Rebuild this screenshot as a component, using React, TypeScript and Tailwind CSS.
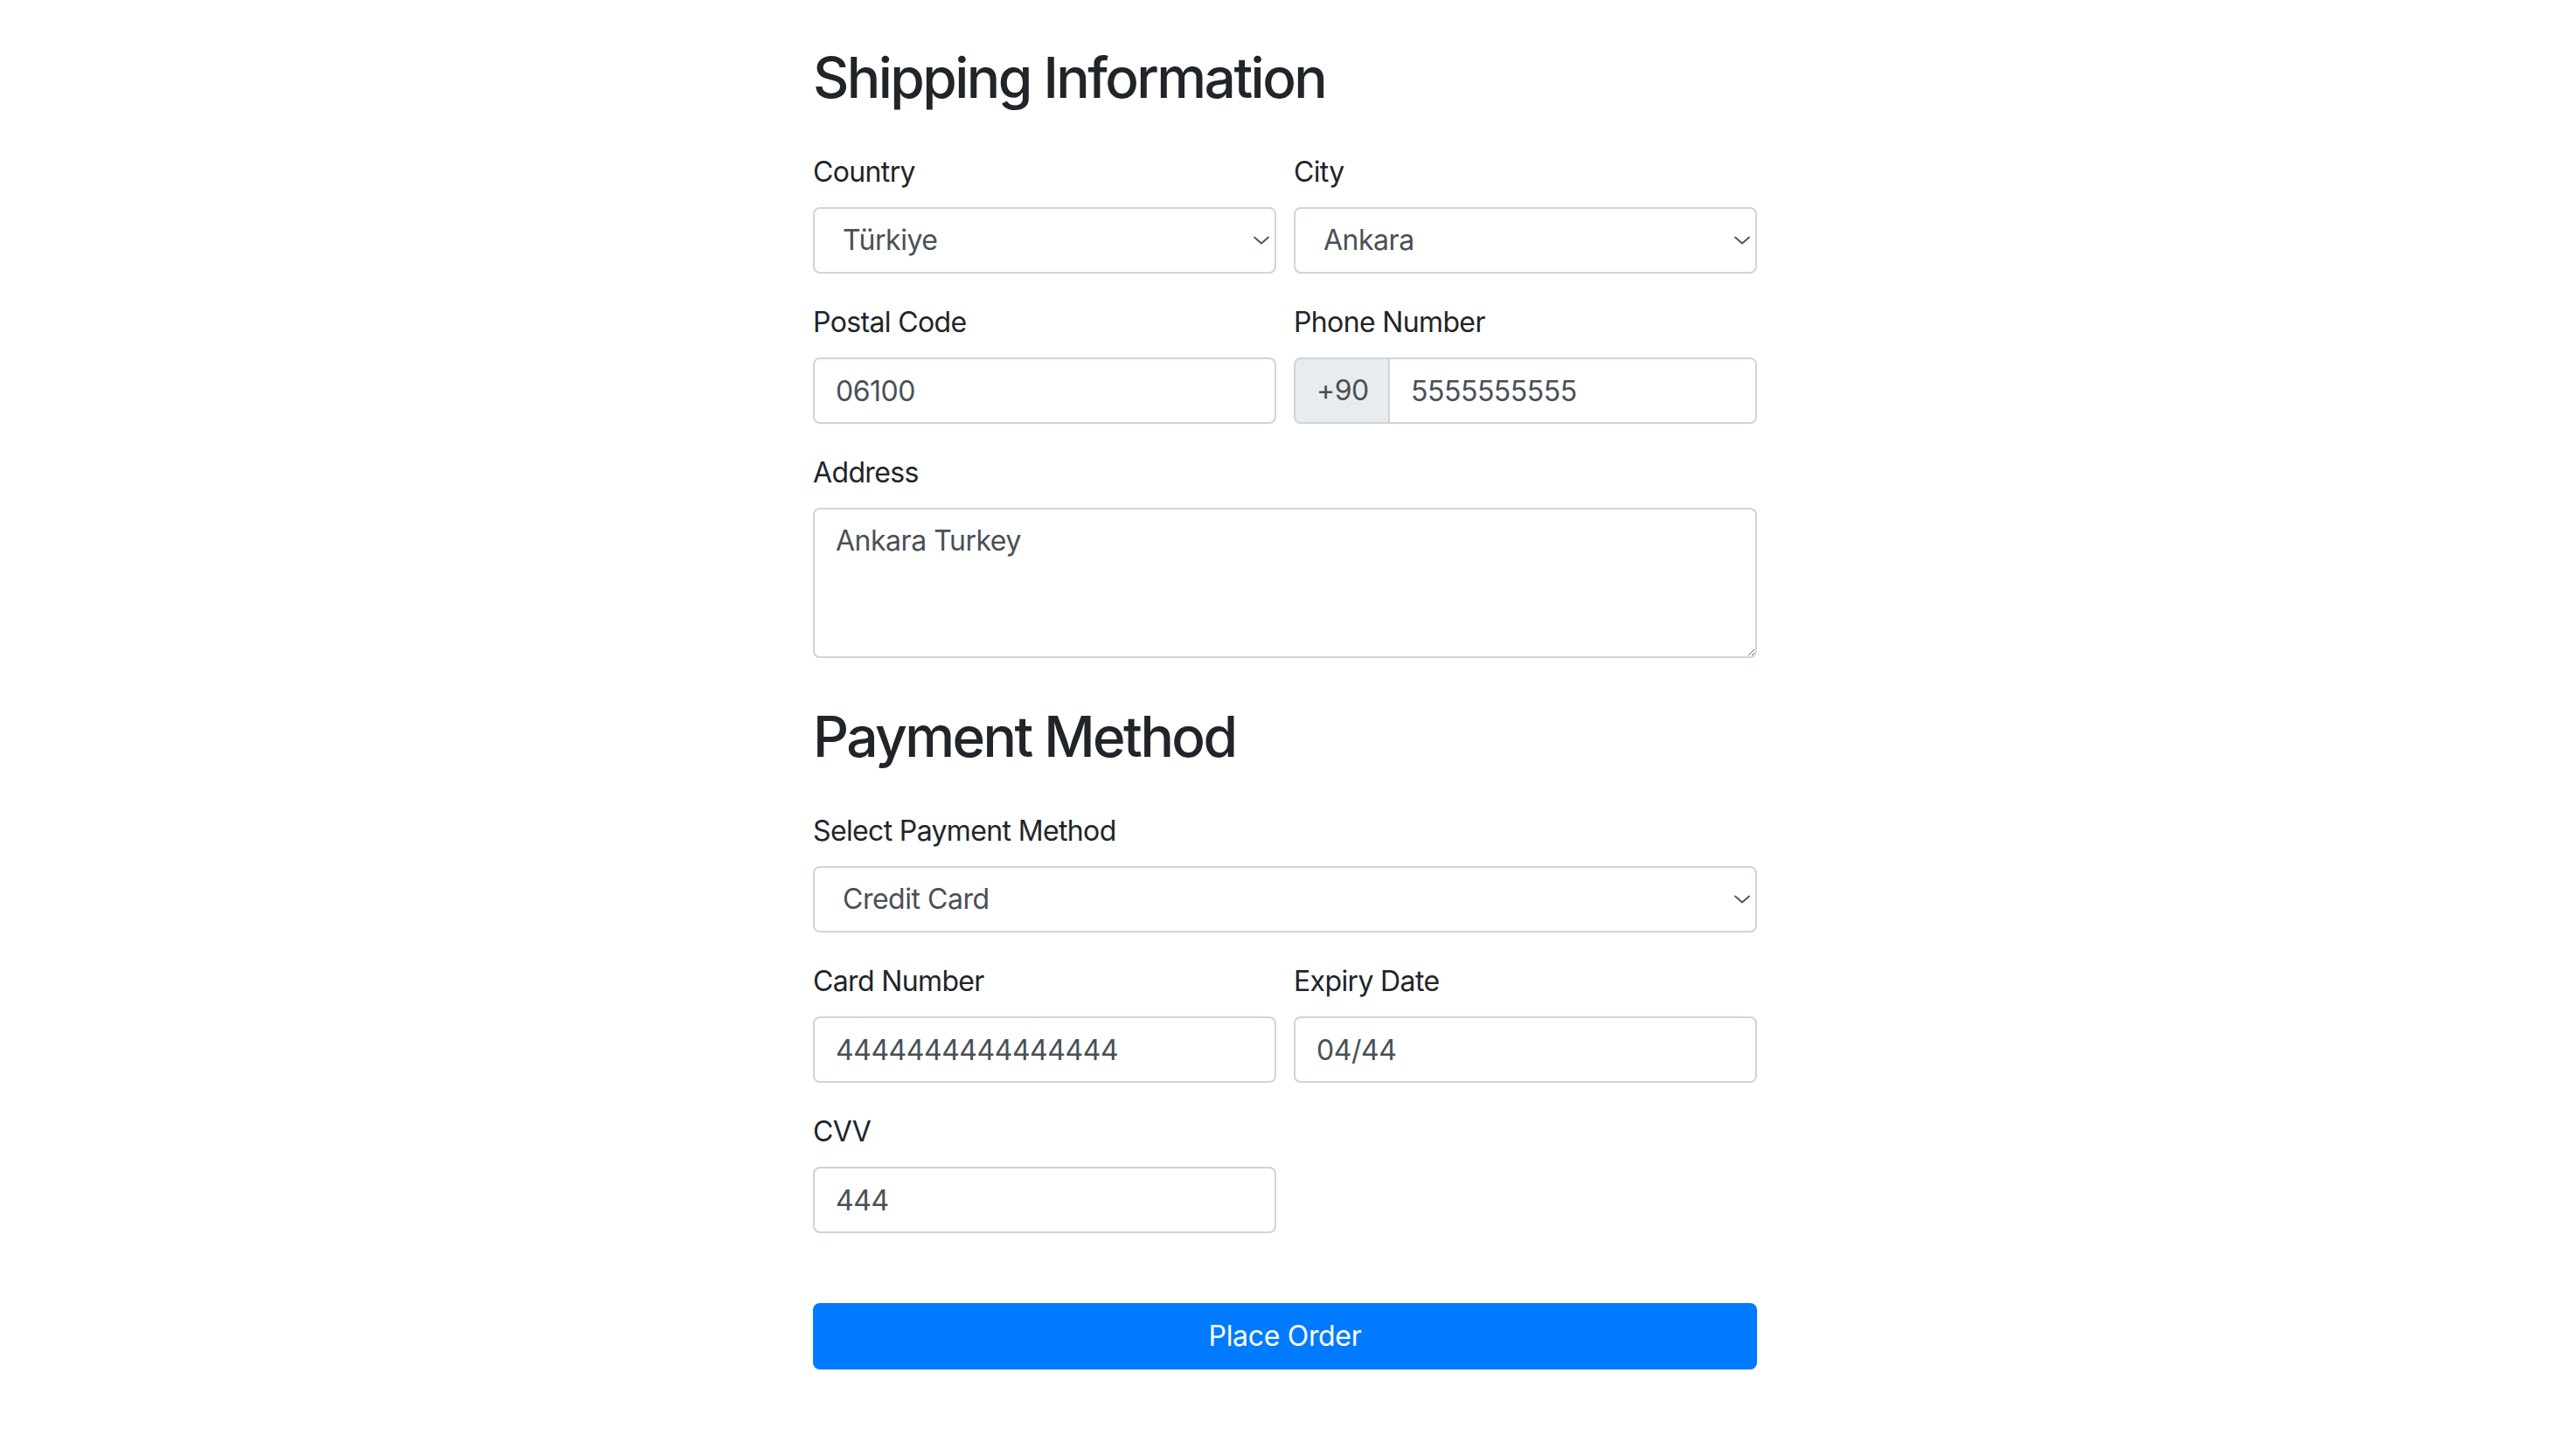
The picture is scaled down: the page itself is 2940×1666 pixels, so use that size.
import React from 'react';

type FieldProps = { label: string; children: React.ReactNode };

const Field: React.FC<FieldProps> = ({ label, children }) => (
    <div className="mb-[32px]">
        <label className="block mb-[16px] text-[32px] leading-[48px] text-[#212529] tracking-[-0.02em]">{label}</label>
        {children}
    </div>
);

const inputCls =
    'block w-full h-[76px] px-[24px] bg-white border-2 border-[#ced4da] rounded-[8px] text-[32px] leading-[48px] text-[#495057] tracking-[-0.015em] outline-none';

const Chevron = () => (
    <svg className="absolute right-[8px] top-1/2 -translate-y-1/2 pointer-events-none" width="18" height="10" viewBox="0 0 18 10" fill="none">
        <path d="M1 1.5l8 7 8-7" stroke="#495057" strokeWidth="1.8" strokeLinecap="round" strokeLinejoin="round" />
    </svg>
);

const Select: React.FC<{ value: string }> = ({ value }) => (
    <div className="relative">
        <select
            defaultValue={value}
            className="block w-full h-[76px] pl-[32px] pr-[48px] appearance-none bg-white border-2 border-[#ced4da] rounded-[8px] text-[32px] text-[#495057] tracking-[-0.015em] outline-none"
        >
            <option>{value}</option>
        </select>
        <Chevron />
    </div>
);

const App: React.FC = () => {
    return (
        <div className="min-h-screen bg-white font-['Inter',sans-serif]">
            <form className="w-[1080px] mx-auto pt-[50px] pb-[80px]" onSubmit={(e) => e.preventDefault()}>
                <h2 className="mb-[46px] text-[64px] leading-[77px] font-medium text-[#212529] tracking-[-0.04em]">Shipping Information</h2>

                <div className="grid grid-cols-2 gap-x-[20px]">
                    <Field label="Country">
                        <Select value="Türkiye" />
                    </Field>
                    <Field label="City">
                        <Select value="Ankara" />
                    </Field>
                    <Field label="Postal Code">
                        <input className={inputCls} defaultValue="06100" />
                    </Field>
                    <Field label="Phone Number">
                        <div className="flex">
                            <div className="flex items-center w-[110px] shrink-0 pl-[24px] bg-[#e9ecef] border-2 border-[#ced4da] rounded-l-[8px] text-[32px] text-[#495057] tracking-[-0.015em]">
                                +90
                            </div>
                            <input
                                className="block w-full min-w-0 h-[76px] px-[24px] bg-white border-2 border-l-0 border-[#ced4da] rounded-r-[8px] text-[32px] text-[#495057] tracking-[-0.015em] outline-none"
                                defaultValue="5555555555"
                            />
                        </div>
                    </Field>
                </div>

                <Field label="Address">
                    <textarea
                        className="block w-full h-[172px] px-[24px] py-[12px] bg-white border-2 border-[#ced4da] rounded-[8px] text-[32px] leading-[48px] text-[#495057] tracking-[-0.015em] outline-none resize-y"
                        defaultValue="Ankara Turkey"
                    />
                </Field>

                <h2 className="mt-[51px] mb-[46px] text-[64px] leading-[77px] font-medium text-[#212529] tracking-[-0.04em]">Payment Method</h2>

                <Field label="Select Payment Method">
                    <Select value="Credit Card" />
                </Field>

                <div className="grid grid-cols-2 gap-x-[20px]">
                    <Field label="Card Number">
                        <input className={inputCls} defaultValue="4444444444444444" />
                    </Field>
                    <Field label="Expiry Date">
                        <input className={inputCls} defaultValue="04/44" />
                    </Field>
                    <Field label="CVV">
                        <input className={inputCls} defaultValue="444" />
                    </Field>
                </div>

                <button type="submit" className="mt-[48px] block w-full h-[76px] bg-[#007bff] rounded-[8px] text-[32px] text-white tracking-[-0.01em]">
                    Place Order
                </button>
            </form>
        </div>
    );
};

export default App;
